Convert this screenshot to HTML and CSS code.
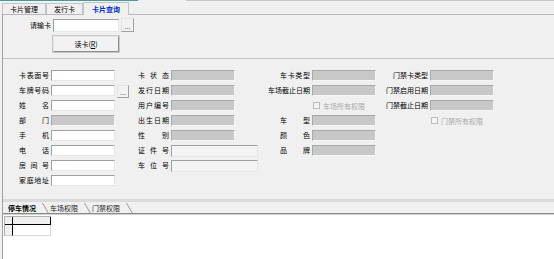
FILE: index.html
```html
<!DOCTYPE html>
<html lang="zh-CN">
<head>
    <meta charset="UTF-8">
    <title>卡片查询</title>
    <link rel="stylesheet" href="styles.css">
</head>
<body>
    <div class="topline"></div>
    <div class="tabs">
        <span class="tab">卡片管理</span>
        <span class="tab">发行卡</span>
        <span class="tab active">卡片查询</span>
    </div>

    <div class="frame">
        <!-- card reader -->
        <div class="reader">
            <div class="reader-row">
                <span class="reader-label">请输卡</span>
                <span class="field reader-field"></span>
                <span class="dots">...</span>
            </div>
            <div class="read-btn">读卡(<u>R</u>)</div>
        </div>

        <!-- card details -->
        <div class="form">
            <div class="col col1">
                <div class="row"><span class="lbl">卡表面号</span><span class="field"></span></div>
                <div class="row"><span class="lbl">车牌号码</span><span class="field"></span><span class="dots small">...</span></div>
                <div class="row"><span class="lbl">姓名</span><span class="field"></span></div>
                <div class="row"><span class="lbl">部门</span><span class="field off"></span></div>
                <div class="row"><span class="lbl">手机</span><span class="field"></span></div>
                <div class="row"><span class="lbl">电话</span><span class="field"></span></div>
                <div class="row"><span class="lbl">房间号</span><span class="field"></span></div>
                <div class="row"><span class="lbl">家庭地址</span><span class="field"></span></div>
            </div>
            <div class="col col2">
                <div class="row"><span class="lbl">卡状态</span><span class="field off"></span></div>
                <div class="row"><span class="lbl">发行日期</span><span class="field off"></span></div>
                <div class="row"><span class="lbl">用户编号</span><span class="field off"></span></div>
                <div class="row"><span class="lbl">出生日期</span><span class="field off"></span></div>
                <div class="row"><span class="lbl">性别</span><span class="field off"></span></div>
                <div class="row"><span class="lbl">证件号</span><span class="field wide"></span></div>
                <div class="row"><span class="lbl">车位号</span><span class="field wide"></span></div>
            </div>
            <div class="col col3">
                <div class="row"><span class="lbl"><span class="j">车卡类型</span></span><span class="field off"></span></div>
                <div class="row"><span class="lbl">车场截止日期</span><span class="field off"></span></div>
                <div class="row"><span class="lbl"></span><span class="check"></span><span class="opt">车场所有权限</span></div>
                <div class="row"><span class="lbl"><span class="j">车型</span></span><span class="field off"></span></div>
                <div class="row"><span class="lbl"><span class="j">颜色</span></span><span class="field off"></span></div>
                <div class="row"><span class="lbl"><span class="j">品牌</span></span><span class="field off"></span></div>
            </div>
            <div class="col col4">
                <div class="row"><span class="lbl">门禁卡类型</span><span class="field off"></span></div>
                <div class="row"><span class="lbl">门禁启用日期</span><span class="field off"></span></div>
                <div class="row"><span class="lbl">门禁截止日期</span><span class="field off"></span></div>
                <div class="row"><span class="lbl"></span><span class="check"></span><span class="opt">门禁所有权限</span></div>
            </div>
        </div>

        <!-- parking / permission tabs -->
        <div class="bottom">
            <div class="btabs">
                <span class="btab active">停车情况</span>
                <span class="btab">车场权限</span>
                <span class="btab">门禁权限</span>
            </div>
            <div class="sheet">
                <div class="grid">
                    <div class="cell corner"></div>
                    <div class="cell head"></div>
                    <div class="cell side"></div>
                    <div class="cell data"></div>
                </div>
            </div>
        </div>
    </div>
</body>
</html>
```

FILE: styles.css
```css
/* Base window */
body {
    margin: 0;
    width: 554px;
    height: 259px;
    overflow: hidden;
    background: #f0f0f0;
    font-family: "Noto Sans CJK SC", "Liberation Sans", sans-serif;
    font-size: 7px;
    color: #000;
}

/* Thin strip left over from the title bar */
.topline {
    height: 1px;
    background: linear-gradient(to right, #449c99 0, #449c99 138px, #f0f0f0 138px, #f0f0f0 186px, #c8c8c8 186px);
}

/* Top page tabs */
.tabs {
    height: 13px;
    display: flex;
    align-items: flex-end;
    padding-left: 2px;
}

.tab {
    box-sizing: border-box;
    height: 11px;
    line-height: 10px;
    padding: 0 7px;
    border: 1px solid #c4c4c4;
    border-bottom: none;
    background: #f0f0f0;
}

.tab.active {
    height: 13px;
    line-height: 12px;
    padding: 0 8px;
    margin-bottom: -1px;
    color: #0030d8;
    font-weight: bold;
    position: relative;
    z-index: 1;
}

/* Everything below the tabs */
.frame {
    margin-left: 2px;
    border-left: 1px solid #a0a0a0;
}

/* Card reader box */
.reader {
    box-sizing: border-box;
    height: 45px;
    padding-left: 24px;
    border-top: 1px solid #b8b8b8;
    border-bottom: 1px solid #c4c4c4;
}

.reader-row {
    display: flex;
    align-items: center;
    gap: 2px;
    margin-top: 3px;
    height: 14px;
}

.reader-label {
    width: 24px;
    text-align: right;
}

.field.reader-field {
    height: 13px;
    width: 66px;
}

.read-btn {
    box-sizing: border-box;
    margin: 4px 0 0 26px;
    width: 66px;
    height: 16px;
    line-height: 14px;
    text-align: center;
    background: #f2f2f2;
    border: 1px solid;
    border-color: #e4e4e4 #8c8c8c #8c8c8c #e4e4e4;
    box-shadow: 0 0 0 1px #c8c8c8;
}

.dots {
    flex: none;
    box-sizing: border-box;
    width: 13px;
    height: 14px;
    line-height: 14px;
    text-align: center;
    color: #555;
    background: #f2f2f2;
    border: 1px solid;
    border-color: #e4e4e4 #a0a0a0 #a0a0a0 #e4e4e4;
}

.dots.small {
    width: 12px;
    height: 13px;
    line-height: 13px;
    margin-top: 2px;
}

/* Detail form */
.form {
    height: 140px;
    box-sizing: border-box;
    padding: 11px 0 0 16px;
    display: flex;
}

.col {
    flex: none;
    display: flex;
    flex-direction: column;
    gap: 4px;
}

.col1 { width: 119px; }
.col2 { width: 124px; }
.col3 { width: 118px; }
.col4 { width: 120px; }

.row {
    display: flex;
    align-items: center;
    gap: 2px;
    height: 11px;
    white-space: nowrap;
}

.lbl {
    flex: none;
    width: 30px;
    line-height: 11px;
    text-align: justify;
    text-align-last: justify;
}

.col2 .lbl { width: 31px; }

.col3 .lbl,
.col4 .lbl {
    width: 48px;
    text-align: right;
    text-align-last: right;
}

.j {
    display: inline-block;
    width: 30px;
    text-align: justify;
    text-align-last: justify;
}

.check {
    flex: none;
    box-sizing: border-box;
    width: 7px;
    height: 7px;
    margin: 0 1px;
    border: 1px solid #bcbcbc;
    background: #f4f4f4;
}

.opt {
    color: #a8a8a8;
}

.field {
    flex: none;
    box-sizing: border-box;
    width: 64px;
    height: 11px;
    background: #fff;
    border: 1px solid;
    border-color: #a0a0a0 #e6e6e6 #e6e6e6 #a0a0a0;
}

.field.off {
    background: #c8c8c8;
    border-color: #a8a8a8 #f6f6f6 #f6f6f6 #a8a8a8;
}

.field.wide {
    width: 87px;
    height: 12px;
    background: #f4f4f4;
}

/* Bottom tabset and grid */
.bottom {
    border-top: 3px solid #dadada;
}

.btabs {
    height: 11px;
    display: flex;
    padding-left: 2px;
    border-bottom: 1px solid #8a8a8a;
}

.btab {
    position: relative;
    width: 42px;
    box-sizing: border-box;
    padding-left: 3px;
    line-height: 12px;
    color: #222;
}

.btab.active {
    font-weight: bold;
    color: #000;
}

.btab::after {
    content: "";
    position: absolute;
    top: 1px;
    bottom: 0;
    right: 4px;
    width: 0;
    border-right: 1px solid #9a9a9a;
    transform: skewX(30deg);
    transform-origin: top;
}

.sheet {
    height: 46px;
    background: #fff;
    border-top: 1px solid #d0d0d0;
    padding: 1px 0 0 1px;
}

.grid {
    display: grid;
    grid-template-columns: 8px 38px;
    grid-template-rows: 8px 11px;
    width: 46px;
    border-top: 1px solid #b0b0b0;
    border-left: 1px solid #b0b0b0;
}

.cell {
    box-sizing: border-box;
    background: #f0f0f0;
    border-right: 1px solid #000;
    border-bottom: 1px solid #000;
}

.cell.side {
    border-bottom-color: #d0d0d0;
}

.cell.data {
    background: #fff;
    border-right-color: #d8d8d8;
    border-bottom-color: #d8d8d8;
}
```
